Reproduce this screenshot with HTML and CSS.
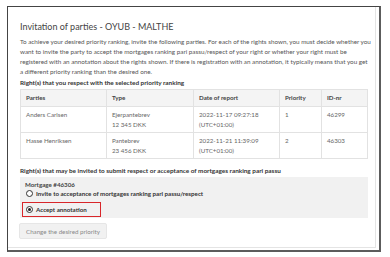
FILE: index.html
```html
<!DOCTYPE html>
<html>
<head>
<meta charset="utf-8">
<link rel="stylesheet" href="styles.css">
</head>
<body>
<div class="frame">
  <div class="card">
    <h1 class="title">Invitation of parties - OYUB - MALTHE</h1>
    <p class="intro">To achieve your desired priority ranking, invite the following parties. For each of the rights shown, you must decide whether you<br>want to invite the party to accept the mortgages ranking pari passu/respect of your right or whether your right must be<br>registered with an annotation about the rights shown. If there is registration with an annotation, it typically means that you get<br>a different priority ranking than the desired one.</p>
    <h2 class="heading">Right(s) that you respect with the selected priority ranking</h2>
    <table class="rights">
      <colgroup>
        <col class="c1"><col class="c2"><col class="c3"><col class="c4"><col class="c5">
      </colgroup>
      <thead>
        <tr><th>Parties</th><th>Type</th><th>Date of report</th><th>Priority</th><th>ID-nr</th></tr>
      </thead>
      <tbody>
        <tr><td>Anders Carlsen</td><td>Ejerpantebrev<br>12 345 DKK</td><td>2022-11-17 09:27:18<br>(UTC+01:00)</td><td>1</td><td>46299</td></tr>
        <tr><td>Hasse Henriksen</td><td>Pantebrev<br>23 456 DKK</td><td>2022-11-21 11:39:09<br>(UTC+01:00)</td><td>2</td><td>46303</td></tr>
      </tbody>
    </table>
    <h2 class="heading h2b">Right(s) that may be invited to submit respect or acceptance of mortgages ranking pari passu</h2>
    <div class="mortgage">
      <div class="m-title">Mortgage #46306</div>
      <label class="radio"><span class="dot"></span>Invite to acceptance of mortgages ranking pari passu/respect</label>
      <label class="radio selected"><span class="dot on"></span>Accept annotation</label>
    </div>
    <button class="btn">Change the desired priority</button>
  </div>
</div>
</body>
</html>
```
FILE: styles.css
```css
html, body {
  margin: 0;
  padding: 0;
  background: #fff;
}
body {
  font-family: Lato, "Liberation Sans", sans-serif;
  color: #555;
}
.frame {
  margin: 6px 0 0 7px;
  width: 371px;
  height: 243px;
  border-left: 1px solid #444;
  border-top: 1px solid #444;
  border-right: 2px solid #5c5c5c;
  border-bottom: 2px solid #5c5c5c;
  box-sizing: content-box;
  overflow: hidden;
}
.card {
  width: 368px;
  height: 241px;
  box-sizing: border-box;
  border-right: 1px solid #e4e4e4;
  border-bottom: 1px solid #e4e4e4;
  padding: 14px 0 0 12px;
}
.title {
  margin: 0;
  font-size: 9px;
  font-weight: 400;
  line-height: 12px;
  color: #444;
}
.intro {
  margin: 4px 0 0;
  font-size: 6.3px;
  line-height: 10px;
  color: #555;
  white-space: nowrap;
}
.heading {
  margin: 1px 0 0;
  font-size: 6.4px;
  font-weight: 700;
  line-height: 10px;
  color: #333;
}
.h2b {
  margin-top: 7px;
}
.rights {
  margin-top: 1px;
  width: 347px;
  border-collapse: collapse;
  table-layout: fixed;
  font-size: 6.2px;
  line-height: 10px;
  color: #666;
}
.c1 { width: 86px; }
.c2 { width: 87px; }
.c3 { width: 86px; }
.c4 { width: 42px; }
.c5 { width: 46px; }
.rights th, .rights td {
  border: 1px solid #e2e2e2;
  padding: 3px 5px;
  text-align: left;
  vertical-align: top;
}
.rights th {
  background: #f4f4f4;
  font-weight: 700;
  color: #444;
}
.rights td {
  padding-top: 3px;
  padding-bottom: 2px;
}
.mortgage {
  margin-top: 1px;
  width: 348px;
  box-sizing: border-box;
  background: #f1f1f1;
  padding: 3px 0 1px 2px;
  font-size: 6.2px;
  line-height: 9px;
}
.m-title {
  padding-left: 3px;
  font-weight: 700;
  color: #444;
}
.radio {
  display: flex;
  align-items: center;
  gap: 3px;
  font-weight: 700;
  color: #333;
  padding: 0 0 0 4px;
  height: 9px;
}
.radio.selected {
  margin-top: 4px;
  width: 79px;
  height: 15px;
  box-sizing: border-box;
  border: 1px solid #d8262a;
  padding-left: 3px;
}
.dot {
  width: 7px;
  height: 7px;
  box-sizing: border-box;
  border: 1px solid #333;
  border-radius: 50%;
  background: #fff;
  flex: none;
  display: flex;
  align-items: center;
  justify-content: center;
}
.dot.on::after {
  content: "";
  width: 3px;
  height: 3px;
  border-radius: 50%;
  background: #222;
}
.btn {
  display: block;
  margin: 5px 0 0 -1px;
  height: 16px;
  padding: 0 6px;
  font-family: Lato, "Liberation Sans", sans-serif;
  font-size: 6.2px;
  color: #888;
  background: #f1f1f1;
  border: 1px solid #e6e6e6;
  border-radius: 2px;
}
```
